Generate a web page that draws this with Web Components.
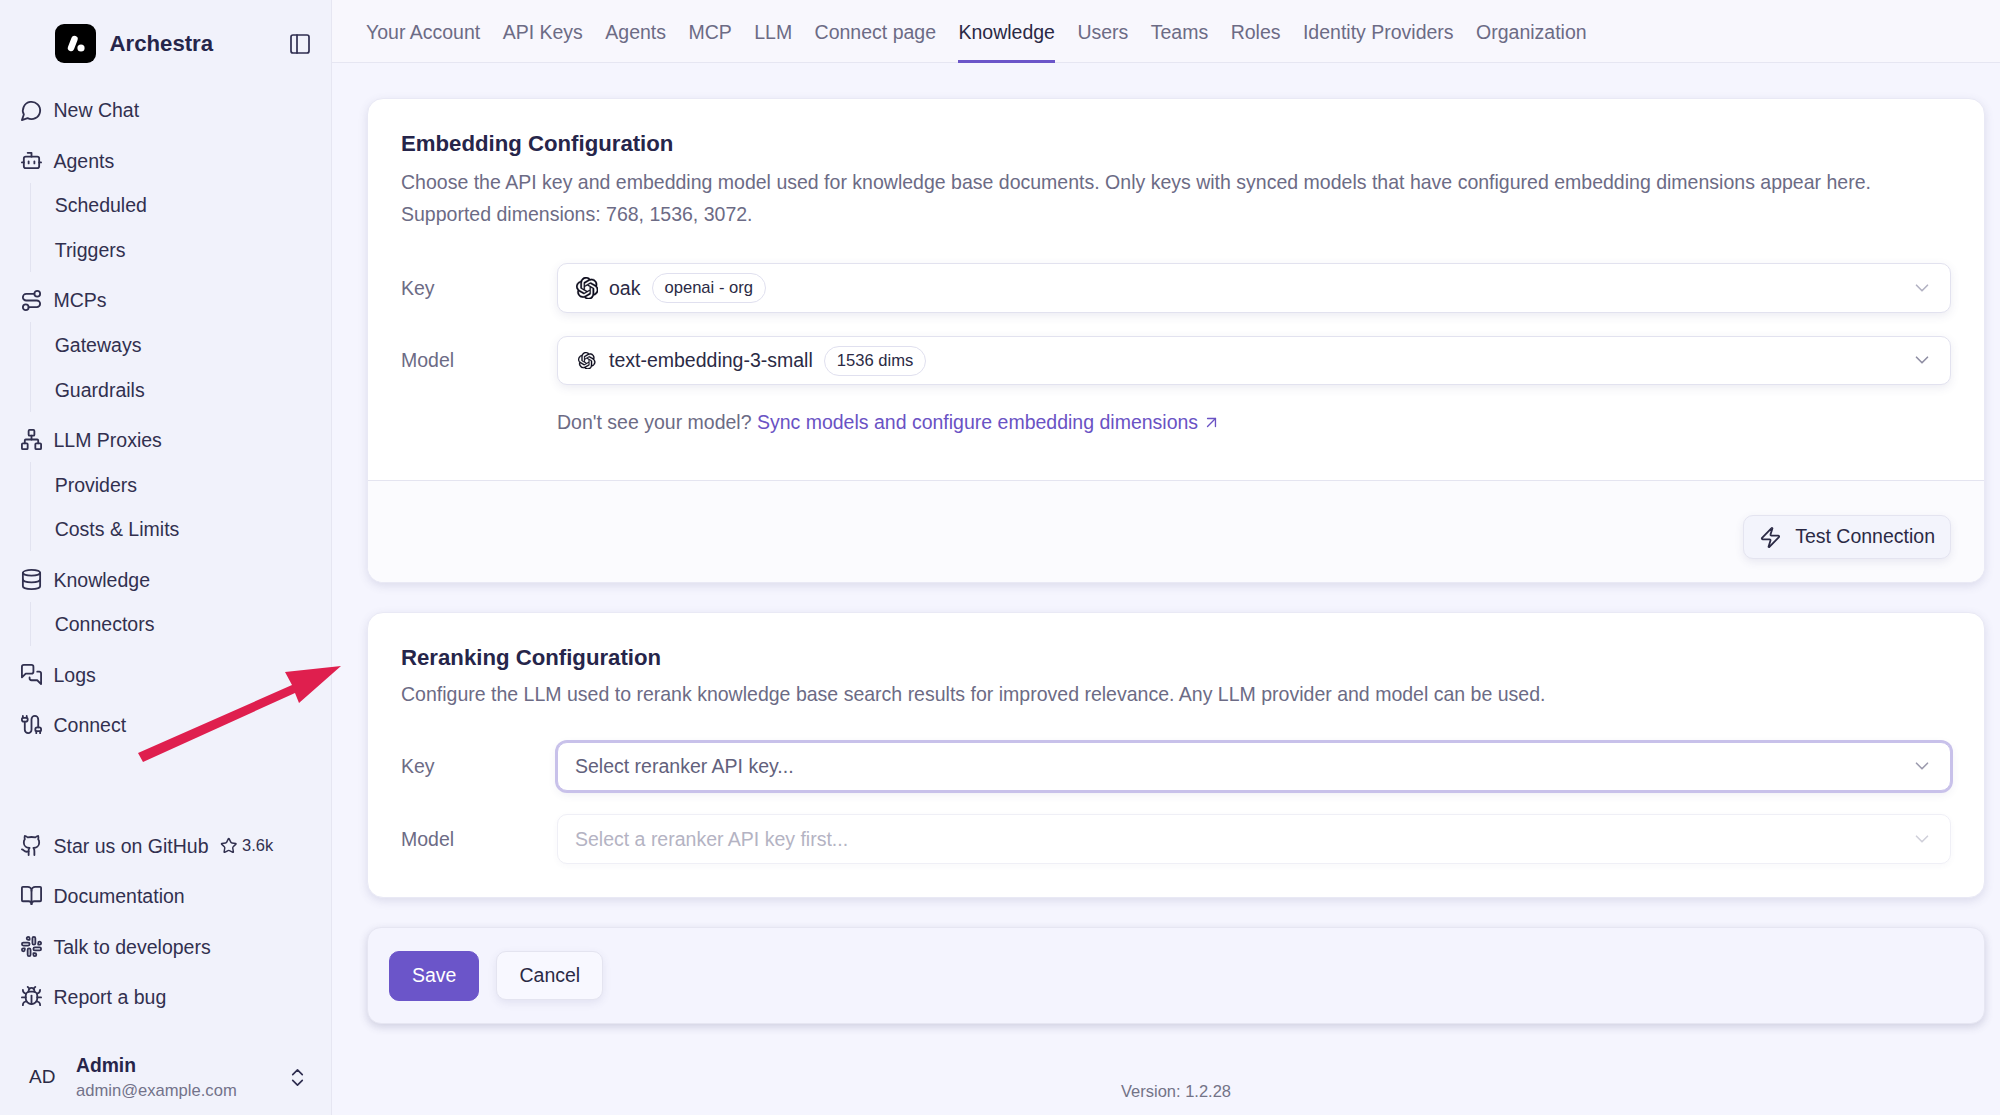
<!DOCTYPE html>
<html lang="en">
<head>
<meta charset="utf-8">
<title>Archestra Knowledge Settings</title>
<style>
  html, body { margin: 0; height: 100%; overflow: hidden; background: #f5f5fe; }
  body { font-family: "Liberation Sans", Arial, sans-serif; }
</style>
</head>
<body>
<ar-app>
  <ar-sidebar slot="sidebar">
    <ar-nav-group icon="chat">New Chat</ar-nav-group>
    <ar-nav-group icon="bot">Agents
      <ar-sub slot="subs">Scheduled</ar-sub><ar-sub slot="subs">Triggers</ar-sub>
    </ar-nav-group>
    <ar-nav-group icon="route">MCPs
      <ar-sub slot="subs">Gateways</ar-sub><ar-sub slot="subs">Guardrails</ar-sub>
    </ar-nav-group>
    <ar-nav-group icon="network">LLM Proxies
      <ar-sub slot="subs">Providers</ar-sub><ar-sub slot="subs">Costs &amp; Limits</ar-sub>
    </ar-nav-group>
    <ar-nav-group icon="database">Knowledge
      <ar-sub slot="subs">Connectors</ar-sub>
    </ar-nav-group>
    <ar-nav-group icon="logs">Logs</ar-nav-group>
    <ar-nav-group icon="cable">Connect</ar-nav-group>

    <ar-nav-group slot="bottom" icon="github">Star us on GitHub<ar-stars slot="extra">3.6k</ar-stars></ar-nav-group>
    <ar-nav-group slot="bottom" icon="book">Documentation</ar-nav-group>
    <ar-nav-group slot="bottom" icon="slack">Talk to developers</ar-nav-group>
    <ar-nav-group slot="bottom" icon="bug">Report a bug</ar-nav-group>

    <ar-user slot="user" name="Admin" email="admin@example.com" initials="AD"></ar-user>
  </ar-sidebar>

  <ar-tabs slot="tabs">
    <ar-tab>Your Account</ar-tab><ar-tab>API Keys</ar-tab><ar-tab>Agents</ar-tab><ar-tab>MCP</ar-tab><ar-tab>LLM</ar-tab><ar-tab>Connect page</ar-tab><ar-tab active>Knowledge</ar-tab><ar-tab>Users</ar-tab><ar-tab>Teams</ar-tab><ar-tab>Roles</ar-tab><ar-tab>Identity Providers</ar-tab><ar-tab>Organization</ar-tab>
  </ar-tabs>

  <ar-card heading="Embedding Configuration" fields-gap="33.5" style="--body-pb:42px;--desc-mt:4.5px">
    <span slot="desc">Choose the API key and embedding model used for knowledge base documents. Only keys with synced models that have configured embedding dimensions appear here.<br>Supported dimensions: 768, 1536, 3072.</span>
    <ar-field label="Key">
      <ar-select logo="22.5" chev="#b3b2c3">oak<ar-badge slot="after">openai - org</ar-badge></ar-select>
    </ar-field>
    <ar-field label="Model">
      <ar-select logo="17.5" chev="#8f8ea3">text-embedding-3-small<ar-badge slot="after">1536 dims</ar-badge></ar-select>
    </ar-field>
    <ar-hint>Don't see your model? <ar-link>Sync models and configure embedding dimensions</ar-link></ar-hint>
    <ar-button slot="footer" icon="zap">Test Connection</ar-button>
  </ar-card>

  <ar-card heading="Reranking Configuration" fields-gap="31.5" style="--body-pb:33.5px;--desc-mt:3px">
    <span slot="desc">Configure the LLM used to rerank knowledge base search results for improved relevance. Any LLM provider and model can be used.</span>
    <ar-field label="Key">
      <ar-select focused chev="#9c9bae"><span>Select reranker API key...</span></ar-select>
    </ar-field>
    <ar-field label="Model">
      <ar-select disabled chev="#d0d0da"><span>Select a reranker API key first...</span></ar-select>
    </ar-field>
  </ar-card>

  <ar-actions>
    <ar-button primary>Save</ar-button>
    <ar-button plain>Cancel</ar-button>
  </ar-actions>

  <ar-version>Version: 1.2.28</ar-version>
</ar-app>

<script>
const ICONS = {
  chat: '<path d="M7.9 20A9 9 0 1 0 4 16.1L2 22Z"/>',
  bot: '<path d="M12 8V4H8"/><rect width="16" height="12" x="4" y="8" rx="2"/><path d="M2 14h2"/><path d="M20 14h2"/><path d="M15 13v2"/><path d="M9 13v2"/>',
  route: '<circle cx="6" cy="19" r="3"/><path d="M9 19h8.5a3.5 3.5 0 0 0 0-7h-11a3.5 3.5 0 0 1 0-7H15"/><circle cx="18" cy="5" r="3"/>',
  network: '<rect x="16" y="16" width="6" height="6" rx="1"/><rect x="2" y="16" width="6" height="6" rx="1"/><rect x="9" y="2" width="6" height="6" rx="1"/><path d="M5 16v-3a1 1 0 0 1 1-1h12a1 1 0 0 1 1 1v3"/><path d="M12 12V8"/>',
  database: '<ellipse cx="12" cy="5" rx="9" ry="3"/><path d="M3 5V19A9 3 0 0 0 21 19V5"/><path d="M3 12A9 3 0 0 0 21 12"/>',
  logs: '<path d="M14 9a2 2 0 0 1-2 2H6l-4 4V4a2 2 0 0 1 2-2h8a2 2 0 0 1 2 2z"/><path d="M18 9h2a2 2 0 0 1 2 2v11l-4-4h-6a2 2 0 0 1-2-2v-1"/>',
  cable: '<path d="M17 21v-2a1 1 0 0 1-1-1v-1a2 2 0 0 1 2-2h2a2 2 0 0 1 2 2v1a1 1 0 0 1-1 1"/><path d="M19 15V6.5a1 1 0 0 0-7 0v11a1 1 0 0 1-7 0V9"/><path d="M21 21v-2h-4"/><path d="M3 5h4V3"/><path d="M7 5a1 1 0 0 1 1 1v1a2 2 0 0 1-2 2H4a2 2 0 0 1-2-2V6a1 1 0 0 1 1-1V3"/>',
  github: '<path d="M15 22v-4a4.8 4.8 0 0 0-1-3.5c3 0 6-2 6-5.5.08-1.25-.27-2.48-1-3.5.28-1.15.28-2.35 0-3.5 0 0-1 0-3 1.5-2.64-.5-5.36-.5-8 0C6 2 5 2 5 2c-.3 1.15-.3 2.35 0 3.5A5.403 5.403 0 0 0 4 9c0 3.5 3 5.5 6 5.5-.39.49-.68 1.05-.85 1.65-.17.6-.22 1.23-.15 1.85v4"/><path d="M9 18c-4.51 2-5-2-7-2"/>',
  book: '<path d="M12 7v14"/><path d="M3 18a1 1 0 0 1-1-1V4a1 1 0 0 1 1-1h5a4 4 0 0 1 4 4 4 4 0 0 1 4-4h5a1 1 0 0 1 1 1v13a1 1 0 0 1-1 1h-6a3 3 0 0 0-3 3 3 3 0 0 0-3-3z"/>',
  slack: '<rect x="13" y="2" width="3" height="8" rx="1.5"/><path d="M19 8.5V10h1.5A1.5 1.5 0 1 0 19 8.5"/><rect x="8" y="14" width="3" height="8" rx="1.5"/><path d="M5 15.5V14H3.5A1.5 1.5 0 1 0 5 15.5"/><rect x="14" y="13" width="8" height="3" rx="1.5"/><path d="M15.5 19H14v1.5a1.5 1.5 0 1 0 1.5-1.5"/><rect x="2" y="8" width="8" height="3" rx="1.5"/><path d="M8.5 5H10V3.5A1.5 1.5 0 1 0 8.5 5"/>',
  bug: '<path d="m8 2 1.88 1.88"/><path d="M14.12 3.88 16 2"/><path d="M9 7.13v-1a3.003 3.003 0 1 1 6 0v1"/><path d="M12 20c-3.3 0-6-2.7-6-6v-3a4 4 0 0 1 4-4h4a4 4 0 0 1 4 4v3c0 3.3-2.7 6-6 6"/><path d="M12 20v-9"/><path d="M6.53 9C4.6 8.8 3 7.1 3 5"/><path d="M6 13H2"/><path d="M3 21c0-2.1 1.7-3.9 3.8-4"/><path d="M20.97 5c0 2.1-1.6 3.8-3.5 4"/><path d="M22 13h-4"/><path d="M17.2 17c2.1.1 3.8 1.9 3.8 4"/>',
  star: '<path d="M11.525 2.295a.53.53 0 0 1 .95 0l2.31 4.679a2.123 2.123 0 0 0 1.595 1.16l5.166.756a.53.53 0 0 1 .294.904l-3.736 3.638a2.123 2.123 0 0 0-.611 1.878l.882 5.14a.53.53 0 0 1-.771.56l-4.618-2.428a2.122 2.122 0 0 0-1.973 0L6.396 21.01a.53.53 0 0 1-.77-.56l.881-5.139a2.122 2.122 0 0 0-.611-1.879L2.16 9.795a.53.53 0 0 1 .294-.906l5.165-.755a2.122 2.122 0 0 0 1.597-1.16z"/>',
  updown: '<path d="m7 15 5 5 5-5"/><path d="m7 9 5-5 5 5"/>',
  panel: '<rect width="18" height="18" x="3" y="3" rx="2"/><path d="M9 3v18"/>',
  chevron: '<path d="m6 9 6 6 6-6"/>',
  zap: '<path d="M4 14a1 1 0 0 1-.78-1.63l9.9-10.2a.5.5 0 0 1 .86.46l-1.92 6.02A1 1 0 0 0 13 10h7a1 1 0 0 1 .78 1.63l-9.9 10.2a.5.5 0 0 1-.86-.46l1.92-6.02A1 1 0 0 0 11 14z"/>',
  upright: '<path d="M7 7h10v10"/><path d="M7 17 17 7"/>'
};
const OPENAI = 'M22.2819 9.8211a5.9847 5.9847 0 0 0-.5157-4.9108 6.0462 6.0462 0 0 0-6.5098-2.9A6.0651 6.0651 0 0 0 4.9807 4.1818a5.9847 5.9847 0 0 0-3.9977 2.9 6.0462 6.0462 0 0 0 .7427 7.0966 5.98 5.98 0 0 0 .511 4.9107 6.051 6.051 0 0 0 6.5146 2.9001A5.9847 5.9847 0 0 0 13.2599 24a6.0557 6.0557 0 0 0 5.7718-4.2058 5.9894 5.9894 0 0 0 3.9977-2.9001 6.0557 6.0557 0 0 0-.7475-7.0729zm-9.022 12.6081a4.4755 4.4755 0 0 1-2.8764-1.0408l.1419-.0804 4.7783-2.7582a.7948.7948 0 0 0 .3927-.6813v-6.7369l2.02 1.1686a.071.071 0 0 1 .038.052v5.5826a4.504 4.504 0 0 1-4.4945 4.4944zm-9.6607-4.1254a4.4708 4.4708 0 0 1-.5346-3.0137l.142.0852 4.783 2.7582a.7712.7712 0 0 0 .7806 0l5.8428-3.3685v2.3324a.0804.0804 0 0 1-.0332.0615L9.74 19.9502a4.4992 4.4992 0 0 1-6.1408-1.6464zM2.3408 7.8956a4.485 4.485 0 0 1 2.3655-1.9728V11.6a.7664.7664 0 0 0 .3879.6765l5.8144 3.3543-2.0201 1.1685a.0757.0757 0 0 1-.071 0l-4.8303-2.7865A4.504 4.504 0 0 1 2.3408 7.872zm16.5963 3.8558L13.1038 8.364 15.1192 7.2a.0757.0757 0 0 1 .071 0l4.8303 2.7913a4.4944 4.4944 0 0 1-.6765 8.1042v-5.6772a.79.79 0 0 0-.407-.667zm2.0107-3.0231l-.142-.0852-4.7735-2.7818a.7759.7759 0 0 0-.7854 0L9.409 9.2297V6.8974a.0662.0662 0 0 1 .0284-.0615l4.8303-2.7866a4.4992 4.4992 0 0 1 6.6802 4.66zM8.3065 12.863l-2.02-1.1638a.0804.0804 0 0 1-.038-.0567V6.0742a4.4992 4.4992 0 0 1 7.3757-3.4537l-.142.0805L8.704 5.459a.7948.7948 0 0 0-.3927.6813zm1.0976-2.3654l2.602-1.4998 2.6069 1.4998v2.9994l-2.5974 1.4997-2.6067-1.4997Z';

function icon(name, size, sw) {
  return `<svg width="${size}" height="${size}" viewBox="0 0 24 24" fill="none" stroke="currentColor" stroke-width="${sw || 1.9}" stroke-linecap="round" stroke-linejoin="round" style="display:block;flex:none">${ICONS[name]}</svg>`;
}
function define(tag, render) {
  customElements.define(tag, class extends HTMLElement {
    constructor() { super(); this.attachShadow({ mode: 'open' }); }
    connectedCallback() { if (!this.shadowRoot.innerHTML) this.shadowRoot.innerHTML = render(this); }
  });
}

define('ar-app', () => `<style>
  :host { display: flex; width: 2000px; height: 1115px; position: relative; overflow: hidden; color: #2b2a45; font: 19.5px/1.3 "Liberation Sans", Arial, sans-serif; background: #f5f5fe; }
  main { flex: 1; min-width: 0; display: flex; flex-direction: column; }
  .content { flex: 1; display: flex; flex-direction: column; gap: 29px; padding: 35px 15px 0 35px; }
  .arrow { position: absolute; left: 130px; top: 655px; pointer-events: none; }
</style>
<slot name="sidebar"></slot>
<main><slot name="tabs"></slot><div class="content"><slot></slot></div></main>
<svg class="arrow" width="220" height="115" viewBox="130 655 220 115"><polygon fill="#df1f4e" points="138,753 143,762 295,693 299,703 341,666 285,672 292,685"/></svg>`);

define('ar-sidebar', () => `<style>
  :host { display: flex; flex-direction: column; flex: none; width: 331px; height: 1115px; background: #f1f2fb; border-right: 1px solid #e6e6f2; }
  header { display: flex; align-items: center; height: 39px; padding: 24px 19.5px 26px 55px; }
  .logo { width: 41px; height: 39px; flex: none; display: block; }
  .brand { margin-left: 13.5px; padding-top: 2px; font-size: 22.2px; font-weight: 700; color: #26254a; flex: 1; }
  .toggle { color: #2f2e50; }
  nav { display: block; }
  .bottom { margin-top: auto; }
</style>
<header>
  <svg class="logo" viewBox="0 0 41 39"><rect width="41" height="39" rx="9" fill="#000"/><path d="M19.5 15 16 24" stroke="#fff" stroke-width="6.4" stroke-linecap="round"/><circle cx="26" cy="24" r="3.6" fill="#fff"/></svg>
  <span class="brand">Archestra</span>
  <span class="toggle">${icon('panel', 24, 1.7)}</span>
</header>
<nav><slot></slot></nav>
<nav class="bottom"><slot name="bottom"></slot></nav>
<slot name="user"></slot>`);

define('ar-nav-group', el => `<style>
  :host { display: block; margin-bottom: 8.4px; color: #31304f; font-size: 19.5px; }
  .item { display: flex; align-items: center; height: 42px; padding-left: 19.5px; }
  .label { margin-left: 11px; padding-top: 2px; white-space: nowrap; }
  .subs { display: none; margin: 1.3px 0 -1.2px 29.5px; border-left: 1.3px solid #e2e3f0; padding-left: 24.2px; }
  .subs.on { display: block; }
</style>
<div class="item">${icon(el.getAttribute('icon'), 23)}<span class="label"><slot></slot></span><slot name="extra"></slot></div>
<div class="subs"><slot name="subs"></slot></div>`);

customElements.whenDefined('ar-nav-group').then(() => {
  document.querySelectorAll('ar-nav-group').forEach(g => {
    if (g.querySelector('[slot=subs]')) g.shadowRoot.querySelector('.subs').classList.add('on');
  });
});

define('ar-sub', () => `<style>:host { display: flex; align-items: center; box-sizing: border-box; padding-top: 2px; height: 44.6px; color: #31304f; font-size: 19.5px; }</style><slot></slot>`);

define('ar-stars', () => `<style>
  :host { display: inline-flex; align-items: center; gap: 5px; margin-left: 11px; font-size: 16.5px; color: #31304f; }
</style>${icon('star', 17.5, 2)}<slot></slot>`);

define('ar-user', el => `<style>
  :host { display: flex; align-items: center; box-sizing: border-box; height: 89px; padding: 13px 0 0 29px; color: #2b2a45; }
  .av { width: 47px; flex: none; font-size: 19px; }
  .txt { flex: 1; display: flex; flex-direction: column; padding-top: 2px; }
  .name { font-weight: 700; font-size: 19.3px; line-height: 25px; color: #26254a; }
  .mail { font-size: 16.6px; line-height: 26px; color: #73728a; }
  .ch { margin-right: 22px; color: #2f2e50; }
</style>
<span class="av">${el.getAttribute('initials')}</span>
<span class="txt"><span class="name">${el.getAttribute('name')}</span><span class="mail">${el.getAttribute('email')}</span></span>
<span class="ch">${icon('updown', 23, 1.7)}</span>`);

define('ar-tabs', () => `<style>
  :host { display: flex; flex: none; gap: 22.45px; height: 62px; padding-left: 34px; background: #f8f7fd; border-bottom: 1px solid #e6e6f2; }
</style><slot></slot>`);

define('ar-tab', el => `<style>
  :host { display: flex; align-items: center; box-sizing: border-box; height: 63px; padding-top: 2px; font-size: 19.5px; color: ${el.hasAttribute('active') ? '#2a2945' : '#6c6b85'}; white-space: nowrap; ${el.hasAttribute('active') ? 'border-bottom: 3px solid #6b55c9; padding-top: 5px;' : ''} }
</style><slot></slot>`);

define('ar-card', el => {
  const gap = el.getAttribute('fields-gap') || 34;
  return `<style>
  :host { display: block; flex: none; background: #fff; border-radius: 16px; border: 1px solid #e9e9f5; box-shadow: 0 3px 10px rgba(70,70,130,.14); overflow: hidden; color: #2b2a45; }
  .body { padding: 28px 33px var(--body-pb, 34px); }
  h2 { margin: 0; font-size: 22.2px; line-height: 34px; font-weight: 700; color: #26254a; }
  .desc { margin-top: var(--desc-mt, 5px); font-size: 19.53px; line-height: 32px; color: #6c6b85; }
  .fields { margin-top: ${gap}px; display: flex; flex-direction: column; gap: 23px; }
  .foot { display: none; justify-content: flex-end; padding: 34px 33px 23px; background: #fbfbfe; border-top: 1px solid #e4e4f0; }
  .foot.on { display: flex; }
</style>
<div class="body"><h2>${el.getAttribute('heading')}</h2><div class="desc"><slot name="desc"></slot></div><div class="fields"><slot></slot></div></div>
<div class="foot ${el.querySelector('[slot=footer]') ? 'on' : ''}"><slot name="footer"></slot></div>`;
});

define('ar-field', el => `<style>
  :host { display: grid; grid-template-columns: 156px 1fr; align-items: center; font-size: 19.5px; color: #6c6b85; }
  span { padding-top: 1px; }
</style><span>${el.getAttribute('label')}</span><slot></slot>`);

define('ar-select', el => {
  const hasLogo = el.hasAttribute('logo');
  const size = el.getAttribute('logo');
  const disabled = el.hasAttribute('disabled');
  const focused = el.hasAttribute('focused');
  const color = disabled ? '#b4b3c3' : (hasLogo ? '#2b2a45' : '#62617c');
  return `<style>
  :host { display: flex; align-items: center; box-sizing: border-box; height: 49.5px; min-width: 0; padding: 0 17.5px 0 17px; background: #fff; border: 1px solid ${disabled ? '#efeff6' : focused ? '#c8c1ea' : '#e2e2ef'}; border-radius: 10px; box-shadow: ${focused ? '0 0 0 2px #c8c1ea, 0 3px 10px rgba(70,70,130,.1)' : disabled ? '0 2px 6px rgba(70,70,130,.04)' : '0 3px 10px rgba(70,70,130,.1)'}; font-size: 19.5px; color: ${color}; white-space: nowrap; }
  .logo { width: 24px; height: 24px; margin-right: 10px; display: ${hasLogo ? 'flex' : 'none'}; align-items: center; justify-content: center; color: #0c0b1c; }
  .val { flex: 1; display: flex; align-items: center; gap: 11.5px; padding-top: 1px; }
  .ch { color: ${el.getAttribute('chev') || '#9c9bae'}; }
</style>
<span class="logo"><svg width="${size || 0}" height="${size || 0}" viewBox="0 0 24 24" fill="currentColor" stroke="currentColor" stroke-width=".35"><path d="${OPENAI}"/></svg></span>
<span class="val"><slot></slot><slot name="after"></slot></span>
<span class="ch">${icon('chevron', 22, 1.8)}</span>`;
});

define('ar-badge', () => `<style>
  :host { display: inline-flex; align-items: center; box-sizing: border-box; height: 30px; padding: 0 11.5px; border: 1px solid #e0e0ef; border-radius: 15px; font-size: 16.6px; color: #2b2a45; }
</style><slot></slot>`);

define('ar-hint', () => `<style>
  :host { display: block; margin: -2px 0 0 156px; font-size: 19.5px; line-height: 32px; color: #6c6b85; white-space: nowrap; }
</style><slot></slot>`);

define('ar-link', () => `<style>
  :host { display: inline-flex; align-items: center; gap: 4px; color: #6a52c4; vertical-align: top; }
</style><slot></slot>${icon('upright', 19, 1.7)}`);

define('ar-button', el => {
  const primary = el.hasAttribute('primary');
  const plain = el.hasAttribute('plain');
  const ic = el.getAttribute('icon');
  return `<style>
  :host { display: inline-flex; align-items: center; box-sizing: border-box; height: ${primary ? 50 : plain ? 49.5 : 44}px; padding: 0 ${ic ? 15 : 22}px; gap: 13px; border-radius: 10px; font-size: 19.5px; white-space: nowrap;
    background: ${primary ? '#6b55c9' : plain ? '#f8f8ff' : '#f3f4fc'}; color: ${primary ? '#fff' : '#2b2a45'}; border: 1px solid ${primary ? '#6b55c9' : '#e4e4f0'}; box-shadow: ${primary ? 'none' : '0 3px 9px rgba(70,70,130,.1)'}; }
</style>${ic ? icon(ic, 23, 1.9) : ''}<slot></slot>`;
});

define('ar-actions', () => `<style>
  :host { display: flex; flex: none; align-items: center; gap: 17px; box-sizing: border-box; height: 97px; padding: 0 21px; background: #f4f4fe; border: 1px solid #e6e6f2; border-radius: 14px; box-shadow: 0 3px 9px rgba(60,60,110,.2); }
</style><slot></slot>`);

define('ar-version', () => `<style>
  :host { display: block; margin-top: 25.5px; text-align: center; font-size: 16.5px; line-height: 24px; color: #737387; }
</style><slot></slot>`);
</script>
</body>
</html>
